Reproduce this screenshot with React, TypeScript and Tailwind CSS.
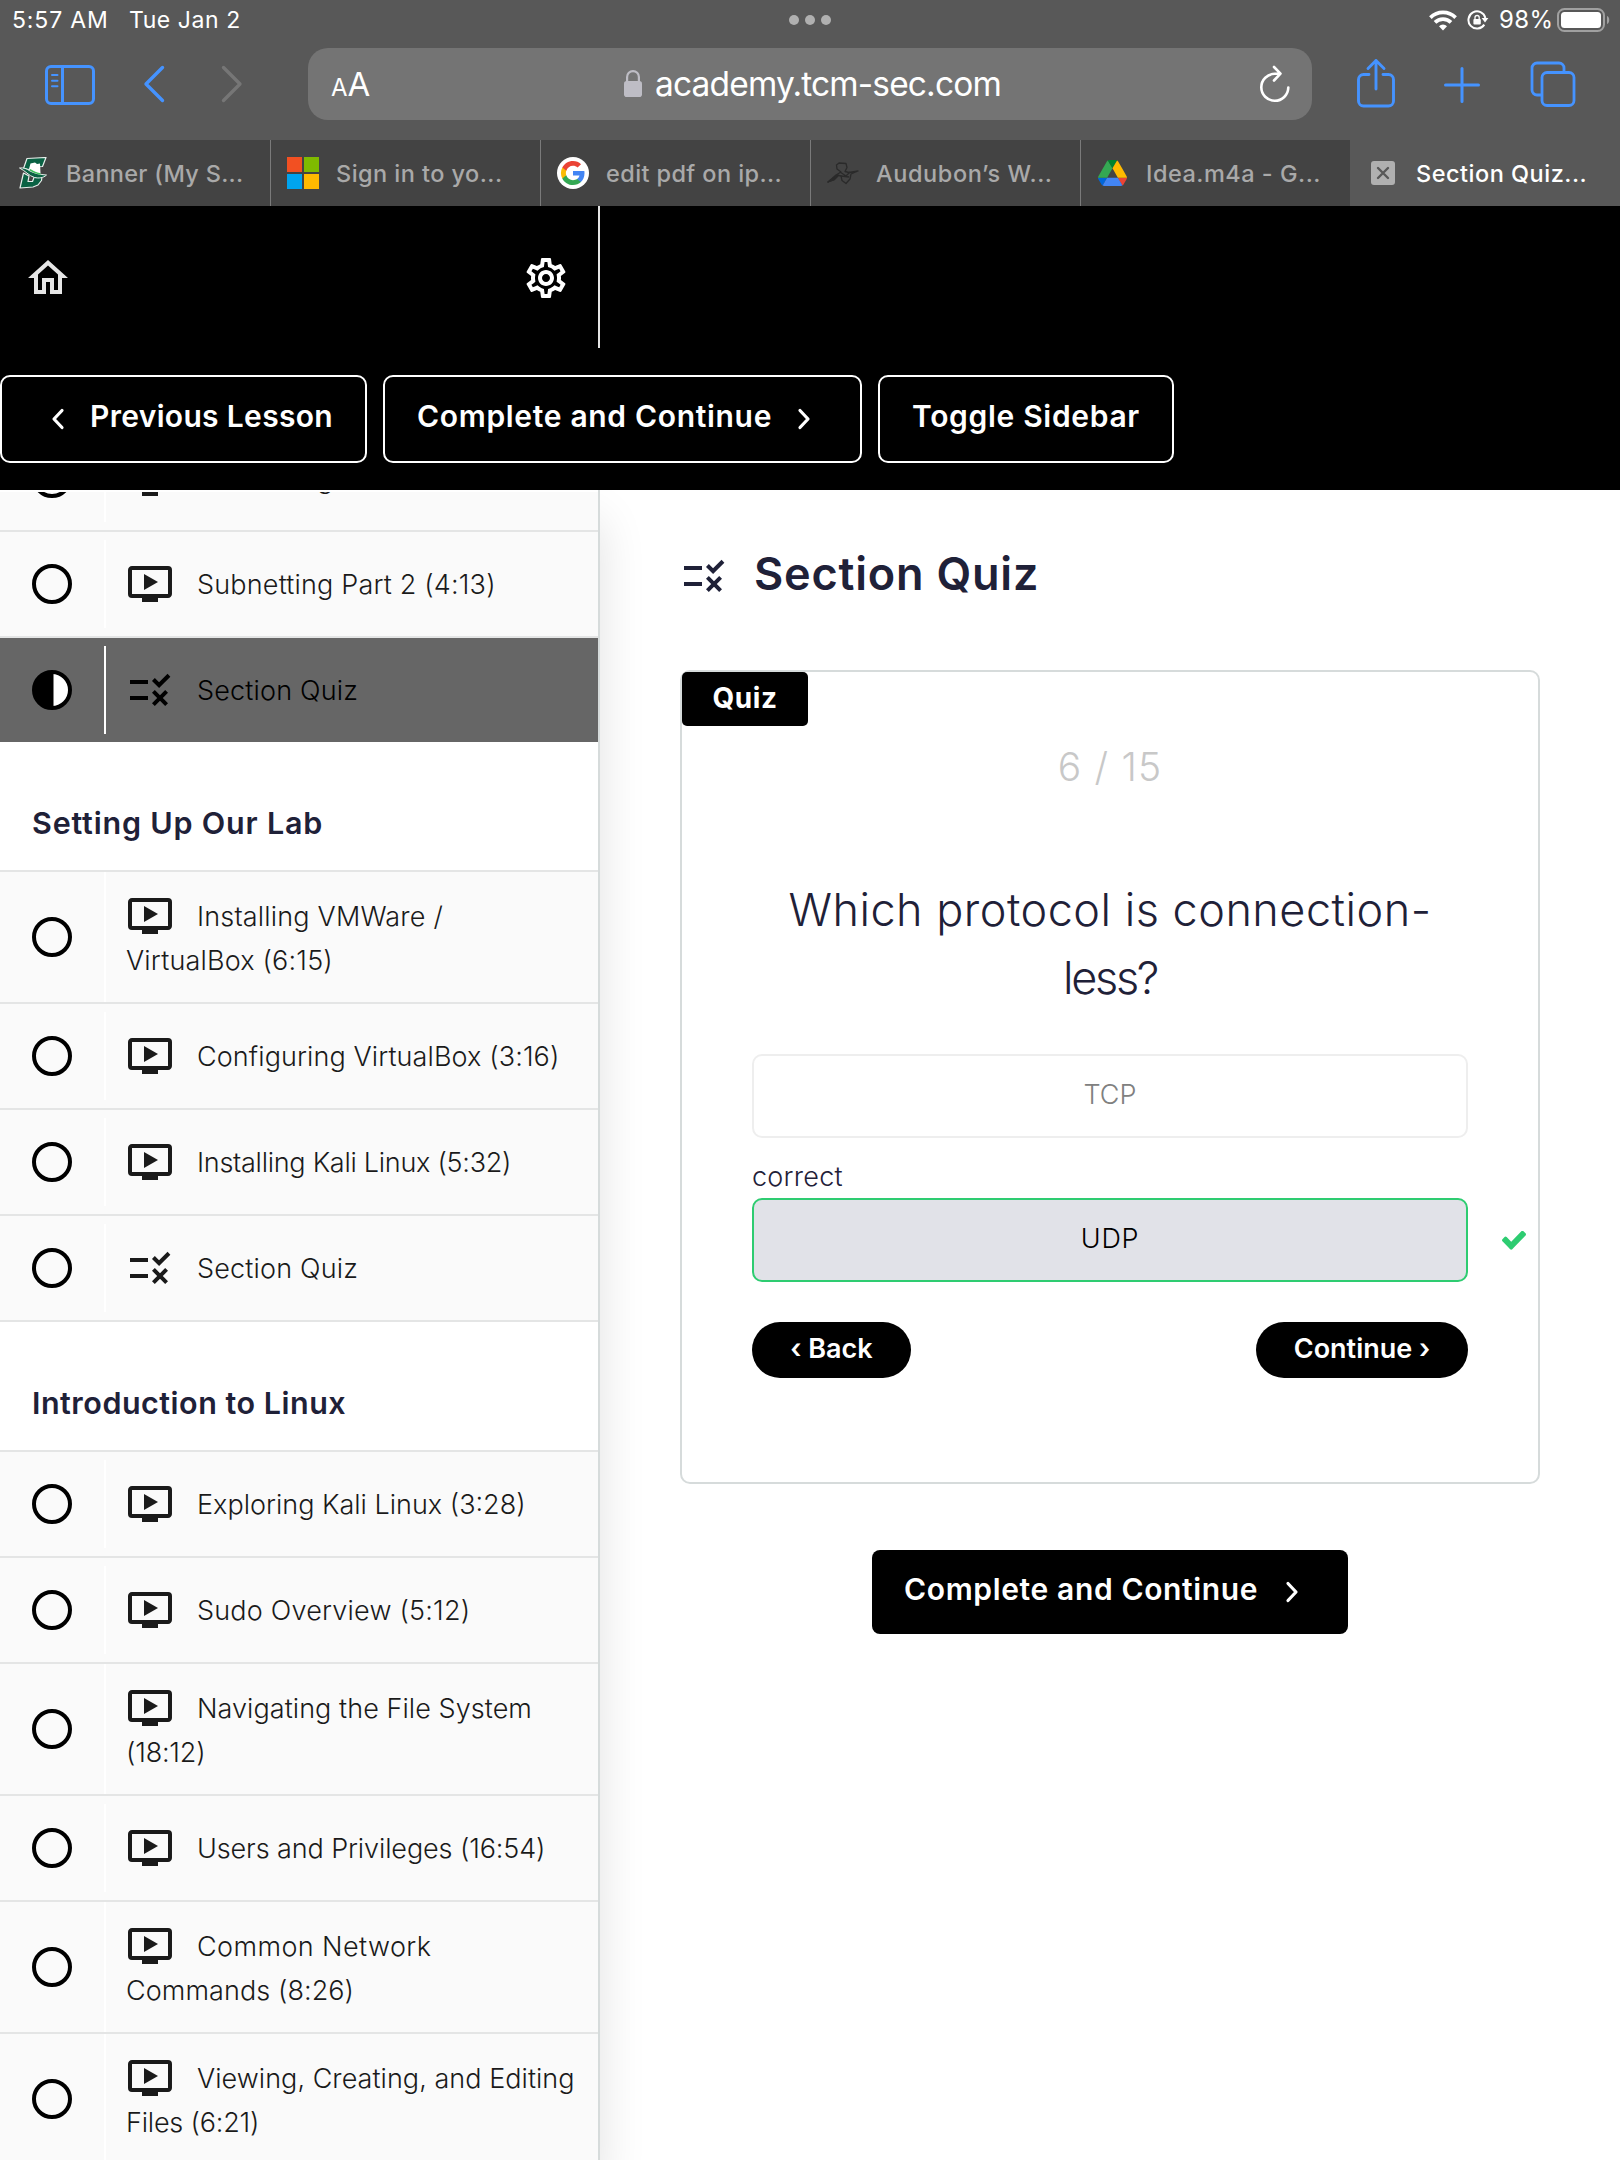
import React from "react";
import { MdOndemandVideo, MdRule, MdOutlineHome, MdOutlineSettings } from "react-icons/md";

const Stroke = ({ w, h, d, sw = 3, cls = "" }: { w: number; h: number; d: string; sw?: number; cls?: string }) => (
  <svg width={w} height={h} viewBox={`0 0 ${w} ${h}`} fill="none" stroke="currentColor" strokeWidth={sw} strokeLinecap="round" strokeLinejoin="round" className={"block shrink-0 " + cls}>
    <path d={d} />
  </svg>
);

const StatusBar = () => (
  <div className="relative flex h-10 items-center justify-between text-[23px] leading-10 text-white">
    <div className="flex">
      <span className="ml-[12px] w-[117px] whitespace-nowrap tracking-[0.850px]">5:57 AM</span>
      <span className="whitespace-nowrap tracking-[0.550px]">Tue Jan 2</span>
    </div>
    <div className="absolute left-[789px] top-[15px] flex gap-[6px]">
      <i className="size-[10px] rounded-full bg-[#b0b0b0]" />
      <i className="size-[10px] rounded-full bg-[#b0b0b0]" />
      <i className="size-[10px] rounded-full bg-[#b0b0b0]" />
    </div>
    <div className="flex items-center">
      <svg width="28" height="21" viewBox="0 0 28 21" className="mr-[10px]" fill="none" stroke="white" strokeWidth="3.700">
        <path d="M1.400 7.600a18 18 0 0 1 25.200 0" />
        <path d="M6 12.400a11.400 11.400 0 0 1 16 0" />
        <path d="M14 20.400l-4-4.200a5.600 5.600 0 0 1 8 0z" fill="white" stroke="none" />
      </svg>
      <svg width="22" height="20" viewBox="0 0 22 20" className="mr-[10px]" fill="none" stroke="white" strokeWidth="2">
        <path d="M17.300 14.600A8.600 8.600 0 1 1 18.400 8" />
        <path d="M14.600 8h6.800L18 12.600z" fill="white" stroke="none" />
        <rect x="6.400" y="9" width="7.400" height="5.600" rx="1" fill="white" stroke="none" />
        <path d="M8 9.400V7.600a2.100 2.100 0 0 1 4.200 0v1.800" strokeWidth="1.300" />
      </svg>
      <span className="w-[58px] whitespace-nowrap text-[24px] tracking-[0.400px]">98%</span>
      <svg width="54" height="24" viewBox="0 0 54 24" className="mr-[9px]">
        <rect x="1" y="1" width="46" height="22" rx="6.500" fill="none" stroke="#a0a0a0" strokeWidth="2" />
        <rect x="4" y="4" width="40" height="16" rx="3.500" fill="white" />
        <path d="M50 8c3 1 3 7 0 8z" fill="#a0a0a0" />
      </svg>
    </div>
  </div>
);

const Toolbar = () => (
  <div className="flex h-[100px] text-[#4593ff]">
    <svg width="50" height="40" viewBox="0 0 50 40" className="ml-[45px] mt-[24.500px]" fill="none" stroke="currentColor" strokeWidth="3">
      <rect x="1.500" y="1.500" width="47" height="37" rx="4.500" />
      <path d="M17.500 2v36" />
      <path d="M7 10h5.500M7 15.700h5.500M7 21.300h5.500" strokeWidth="2" strokeLinecap="round" />
    </svg>
    <Stroke w={24} h={40} d="M19.500 3.500L3 20L19.500 36.500" sw={3.400} cls="ml-[48px] mt-[24px]" />
    <Stroke w={24} h={40} d="M3.500 3.500L20 20L3.500 36.500" sw={3.400} cls="ml-[53px] mt-[24px] text-[#767676]" />
    <div className="ml-[64px] mt-2 flex h-[72px] w-[1004px] items-center rounded-[20px] bg-[#747474] text-white">
      <div className="flex w-[316px] items-baseline pl-[23px] pt-px leading-none">
        <span className="text-[24px]">A</span>
        <span className="text-[33px]">A</span>
      </div>
      <svg width="18" height="27" viewBox="0 0 18 27" className="-mt-[2px]">
        <rect y="11" width="18" height="16" rx="2.800" fill="#bebdc5" />
        <path d="M3.100 12V7a5.900 5.900 0 0 1 11.800 0v5" fill="none" stroke="#bebdc5" strokeWidth="2.200" />
      </svg>
      <span className="ml-[13px] w-[603px] whitespace-nowrap pt-[2px] text-[33.500px] leading-none tracking-[-0.850px]">academy.tcm-sec.com</span>
      <Stroke w={34} h={40} d="M30.300 23.500A13.500 13.500 0 1 1 16.800 9.800H22M16 3L22.500 9.600L16 16.500" sw={2.600} />
    </div>
    <Stroke w={40} h={52} d="M13 16.500H7.500a5 5 0 0 0-5 5V43a5 5 0 0 0 5 5h25a5 5 0 0 0 5-5V21.500a5 5 0 0 0-5-5H27M20 31V2.500M12 10.500L20 2.500L28 10.500" sw={2.900} cls="ml-[44px] mt-[18px]" />
    <Stroke w={38} h={38} d="M19 2.500v33M2.500 19h33" sw={3} cls="ml-[47px] mt-[26px]" />
    <svg width="46" height="46" viewBox="0 0 46 46" className="ml-[49px] mt-[21px]" fill="none" stroke="currentColor" strokeWidth="2.800">
      <path d="M12 34H7a5 5 0 0 1-5-5V7a5 5 0 0 1 5-5h22a5 5 0 0 1 5 5v4.500" />
      <rect x="12" y="11.500" width="32" height="33" rx="5" />
    </svg>
  </div>
);

const icons = {
  s: (
    <svg width="28" height="32" viewBox="0 0 28 32" strokeLinejoin="round">
      <path d="M8 1.500L27 .500L23.500 9.500L16 10L13 13L4.500 11.500z" fill="#0a6244" stroke="#e8efec" strokeWidth="1.200" />
      <path d="M4.500 16L10 19L9 24.500H13.500L15 20.500L23 19.500L22.500 23.500L19 28L14 30L1 31z" fill="#0a6244" stroke="#e8efec" strokeWidth="1.200" />
      <path d="M10 12l1.500-5.500 4.500-1 2 1.500 3-.5.500 9.500-1 1.500z" fill="white" />
      <path d="M.500 11c4-.5 7 .5 10.500 3 5 2.500 10 3.500 16.500 4-3 3-8 3.500-12 2.500C10 19 6 13.500.500 11z" fill="#0a6244" stroke="#e8efec" strokeWidth="1" />
      <path d="M11 12.500c3 2.500 6 3.500 10.500 4.500" stroke="#3fc45c" strokeWidth="1.400" fill="none" />
    </svg>
  ),
  ms: (
    <svg width="32" height="32" viewBox="0 0 32 32">
      <path fill="#f25022" d="M0 0h15v15H0z" />
      <path fill="#7fba00" d="M17 0h15v15H17z" />
      <path fill="#00a4ef" d="M0 17h15v15H0z" />
      <path fill="#ffb900" d="M17 17h15v15H17z" />
    </svg>
  ),
  g: (
    <svg width="32" height="32" viewBox="0 0 32 32">
      <circle cx="16" cy="16" r="16" fill="white" />
      <g transform="translate(4 4)">
        <path fill="#4285F4" d="M23.500 12.270c0-.79-.07-1.540-.19-2.270H12v4.510h6.470c-.29 1.480-1.140 2.730-2.400 3.580v3h3.860c2.260-2.090 3.570-5.170 3.570-8.820z" />
        <path fill="#34A853" d="M12 24c3.240 0 5.950-1.080 7.930-2.910l-3.860-3c-1.080.72-2.450 1.160-4.070 1.160-3.130 0-5.780-2.110-6.730-4.960h-3.980v3.090C3.260 21.300 7.310 24 12 24z" />
        <path fill="#FBBC05" d="M5.270 14.290c-.25-.72-.38-1.490-.38-2.290s.14-1.570.38-2.290V6.620h-3.980a11.860 11.860 0 0 0 0 10.760l3.980-3.090z" />
        <path fill="#EA4335" d="M12 4.750c1.770 0 3.350.61 4.600 1.800l3.420-3.420C17.950 1.190 15.240 0 12 0 7.310 0 3.260 2.700 1.290 6.620l3.980 3.090c.95-2.850 3.600-4.960 6.730-4.960z" />
      </g>
    </svg>
  ),
  bird: (
    <svg width="32" height="24" viewBox="0 0 32 24" fill="none" stroke="#2a2a2a" strokeWidth="1.300" strokeLinejoin="round">
      <path d="M1 21l8-7 5-3-4-3-.500-4L12 2l7 .500 1 4-2 4 4 1 9-1.500-7 3-1 5-4 4.500-4-3-1-4.500-4-1z" />
      <path d="M1 21l5-2 4-4M13 11l6 4 4-4M14 15l8 1" />
      <path d="M1 21l7-5 3-1-4 4z" fill="#2a2a2a" />
    </svg>
  ),
  drive: (
    <svg width="29" height="26" viewBox="0 0 87.300 78">
      <path d="M6.600 66.850l3.850 6.650c.8 1.400 1.950 2.500 3.300 3.300L27.500 53H0c0 1.550.4 3.100 1.200 4.500z" fill="#0066da" />
      <path d="M43.650 25L29.900 1.200c-1.350.8-2.500 1.900-3.300 3.300L1.200 48.500C.4 49.900 0 51.450 0 53h27.500z" fill="#34a853" />
      <path d="M73.550 76.800c1.350-.8 2.500-1.900 3.300-3.300l1.600-2.750 7.650-13.250c.8-1.400 1.200-2.950 1.200-4.500H59.800l5.850 11.500z" fill="#ea4335" />
      <path d="M43.650 25L57.400 1.200C56.050.4 54.500 0 52.900 0H34.400c-1.600 0-3.150.45-4.500 1.200z" fill="#00832d" />
      <path d="M59.800 53H27.500L13.750 76.800c1.350.8 2.900 1.200 4.500 1.200h50.800c1.600 0 3.150-.45 4.500-1.200z" fill="#4285f4" />
      <path d="M73.400 26.500l-12.700-22c-.8-1.400-1.950-2.500-3.300-3.300L43.650 25 59.800 53h27.450c0-1.550-.4-3.100-1.200-4.500z" fill="#ffba00" />
    </svg>
  ),
  x: (
    <svg width="24" height="24" viewBox="0 0 24 24">
      <rect width="24" height="24" rx="3" fill="#b0b0b0" />
      <path d="M7 7l10 10M17 7L7 17" stroke="#585858" strokeWidth="2.400" strokeLinecap="round" />
    </svg>
  ),
};

const tabs = [
  { icon: icons.s, label: "Banner (My S...", tr: "tracking-[0.300px]" },
  { icon: icons.ms, label: "Sign in to yo...", tr: "tracking-[0.450px]" },
  { icon: icons.g, label: "edit pdf on ip...", tr: "tracking-[0.400px]" },
  { icon: icons.bird, label: "Audubon’s W...", tr: "tracking-[0.600px]" },
  { icon: icons.drive, label: "Idea.m4a - G...", tr: "tracking-[0.500px]" },
  { icon: icons.x, label: "Section Quiz...", tr: "tracking-[0.500px]" },
];

const TabBar = () => (
  <div className="grid h-[66px] grid-cols-6">
    {tabs.map((t, i) => (
      <div key={t.label} className={"flex items-center " + (i === 5 ? "text-white" : i === 0 ? "bg-[#434343] text-[#a9a9a9]" : "border-l border-[#7a7a7a] bg-[#434343] text-[#a9a9a9]")}>
        <span className={"flex justify-center " + (i === 0 || i === 5 ? "w-[65px]" : "w-[63px]")}>{t.icon}</span>
        <span className={"mt-[2px] whitespace-nowrap text-[23.500px] font-[550] " + (i === 0 || i === 5 ? "ml-px " : "ml-[2px] ") + t.tr}>{t.label}</span>
      </div>
    ))}
  </div>
);

const LessonBar = () => (
  <div className="h-[284px] bg-black text-white">
    <div className="flex h-[142px] w-[600px] items-center justify-between border-r-2 border-[#e4e4e4] pl-6 pr-7 pt-[2px]">
      <MdOutlineHome size={48} className="text-[#e6e6e6]" />
      <MdOutlineSettings size={48} />
    </div>
    <div className="mt-[27px] flex gap-4 text-[30px] font-semibold">
      <button className="flex h-[88px] w-[367px] items-center rounded-[10px] border-2 border-white pl-[48px]">
        <Stroke w={15} h={22} d="M12 2.500L4 11L12 19.500" sw={3.200} />
        <span className="-mt-[6px] ml-[25px] whitespace-nowrap tracking-[0.320px]">Previous Lesson</span>
      </button>
      <button className="flex h-[88px] w-[479px] items-center rounded-[10px] border-2 border-white pl-[32px]">
        <span className="-mt-[6px] w-[380px] whitespace-nowrap text-left tracking-[0.680px]">Complete and Continue</span>
        <Stroke w={15} h={22} d="M3 2.500L11 11L3 19.500" sw={3.200} />
      </button>
      <button className="flex h-[88px] w-[296px] items-center rounded-[10px] border-2 border-white pl-[32px]">
        <span className="-mt-[6px] whitespace-nowrap tracking-[0.680px]">Toggle Sidebar</span>
      </button>
    </div>
  </div>
);

type Item = { t: React.ReactNode; quiz?: boolean; active?: boolean; tall?: boolean; tr?: string };

const Row = ({ t, quiz, active, tall, tr = "tracking-[0.180px]" }: Item) => (
  <li className={"flex shrink-0 items-center border-t-2 border-[#e4e5e5] " + (tall ? "h-[132px] " : "h-[106px] ") + (active ? "bg-[#666] text-black" : "bg-[#fafafa] text-[#1a1a1a]")}>
    <span className="w-[104px] pl-8">
      <svg width="40" height="40" viewBox="0 0 40 40" className="block">
        <circle cx="20" cy="20" r="18" fill={active ? "white" : "none"} stroke="black" strokeWidth="4" />
        {active && <path d="M21.500 2V38H20a18 18 0 0 1 0-36z" fill="black" />}
      </svg>
    </span>
    <span className={"w-[2px] bg-white " + (tall ? "h-[130px]" : "h-[88px]")} />
    <p className={"ml-5 whitespace-nowrap text-[27px] font-[350] leading-[44px] " + tr + (tall ? " pt-[4px]" : " pt-[2px]")}>
      {quiz ? <MdRule size={48} className="my-[-12px] mr-[23px] inline-block align-[-2px]" /> : <MdOndemandVideo size={48} className="my-[-12px] mr-[23px] inline-block align-[-2px]" />}
      {t}
    </p>
  </li>
);

const Heading = ({ children, tr }: { children: React.ReactNode; tr: string }) => (
  <h2 className={"h-[128px] shrink-0 whitespace-nowrap pl-8 pt-[60px] text-[30.500px] font-semibold leading-[42px] text-[#1f2138] " + tr}>{children}</h2>
);

const Sidebar = () => (
  <aside className="h-[1670px] w-[600px] shrink-0 overflow-hidden border-r-2 border-[#d6dbdb] bg-white pt-[2px]">
    <div className="h-[1668px] overflow-hidden">
      <ul className="-mt-[68px] flex flex-col">
        <Row t="Subnetting Part 1 (27:00)" />
        <Row t="Subnetting Part 2 (4:13)" />
        <Row t="Section Quiz" quiz active />
      </ul>
      <Heading tr="tracking-[0.800px]">Setting Up Our Lab</Heading>
      <ul className="border-b-2 border-[#e4e5e5]">
        <Row tall t={<>Installing VMWare /<br />VirtualBox (6:15)</>} tr="tracking-[0.180px]" />
        <Row t="Configuring VirtualBox (3:16)" tr="tracking-[0.100px]" />
        <Row t="Installing Kali Linux (5:32)" tr="tracking-[-0.270px]" />
        <Row t="Section Quiz" quiz />
      </ul>
      <Heading tr="tracking-[0.500px]">Introduction to Linux</Heading>
      <ul>
        <Row t="Exploring Kali Linux (3:28)" tr="tracking-[0px]" />
        <Row t="Sudo Overview (5:12)" tr="tracking-[0.200px]" />
        <Row tall t={<>Navigating the File System<br /><span className="tracking-[-0.200px]">(18:12)</span></>} tr="tracking-[0.060px]" />
        <Row t="Users and Privileges (16:54)" tr="tracking-[-0.110px]" />
        <Row tall t={<><span className="tracking-[0.400px]">Common Network</span><br />Commands (8:26)</>} tr="tracking-[0.070px]" />
        <Row tall t={<>Viewing, Creating, and Editing<br /><span className="tracking-[-0.200px]">Files (6:21)</span></>} tr="tracking-[0.040px]" />
      </ul>
    </div>
  </aside>
);

const Quiz = () => (
  <section className="mt-[70px] h-[814px] w-[860px] rounded-[10px] border-2 border-[#d6dbdb]">
    <div className="flex h-[54px] w-[126px] items-center justify-center rounded-[5px] bg-black pb-[2px] text-[28px] font-bold tracking-[0.600px] text-white">Quiz</div>
    <p className="mt-[17px] text-center text-[39px] font-light leading-[48px] tracking-[1.200px] text-[#c8c8c8]">6 / 15</p>
    <p className="mt-[85px] text-center text-[45px] font-[350] leading-[68px] tracking-[0.500px] text-[#1f2138]">
      Which protocol is connection-
      <br />
      <span className="tracking-[-2.300px]">less?</span>
    </p>
    <div className="mx-[70px] mt-[42px]">
      <div className="flex h-[84px] items-center justify-center rounded-[10px] border-2 border-[#eee] pb-[2px] text-[27px] font-[350] text-[#808080]">TCP</div>
      <p className="h-[60px] pt-[23px] text-[27px] font-[350] leading-[32px] tracking-[0.250px] text-[#1f2138]">correct</p>
      <div className="relative flex h-[84px] items-center justify-center rounded-[10px] border-2 border-[#2ecc71] bg-[#e1e2e8] pb-[2px] text-[27px] font-[350] tracking-[0.700px] text-black">
        UDP
        <svg width="24" height="19" viewBox="121 350 1550 1190" preserveAspectRatio="none" className="absolute -right-[60px] top-[31px]" fill="#2ecc71">
          <path d="M1671 566q0 40-28 68l-724 724-136 136q-28 28-68 28t-68-28l-136-136-362-362q-28-28-28-68t28-68l136-136q28-28 68-28t68 28l294 295 656-657q28-28 68-28t68 28l136 136q28 28 28 68z" />
        </svg>
      </div>
      <div className="mt-10 flex justify-between text-[27px] font-semibold text-white">
        <button className="h-14 w-[159px] rounded-full bg-black pb-[2px]">‹ Back</button>
        <button className="h-14 w-[212px] rounded-full bg-black pb-[2px]">Continue ›</button>
      </div>
    </div>
  </section>
);

export default function App() {
  return (
    <div className="h-[2160px] w-[1620px] overflow-hidden bg-white font-['Inter',sans-serif]">
      <div className="bg-[#585858]">
        <StatusBar />
        <Toolbar />
        <TabBar />
      </div>
      <LessonBar />
      <div className="flex h-[1670px] overflow-hidden">
        <div className="relative h-[1670px] shadow-[0_30px_44px_rgba(0,0,0,0.120)]">
          <Sidebar />
        </div>
        <main className="ml-20 w-[860px]">
          <h1 className="flex h-[110px] items-end text-[#1f2138]">
            <MdRule size={48} />
            <span className="-mb-px ml-[26px] whitespace-nowrap text-[45px] font-semibold leading-[54px] tracking-[0.800px]">Section Quiz</span>
          </h1>
          <Quiz />
          <div className="mt-[66px] flex justify-center">
            <button className="flex h-[84px] w-[476px] items-center rounded-[8px] bg-black pl-[32px] text-left text-[30px] font-semibold text-white">
              <span className="-mt-[6px] w-[381px] whitespace-nowrap tracking-[0.640px]">Complete and Continue</span>
              <Stroke w={15} h={22} d="M3 2.500L11 11L3 19.500" sw={3.200} />
            </button>
          </div>
        </main>
      </div>
    </div>
  );
}
